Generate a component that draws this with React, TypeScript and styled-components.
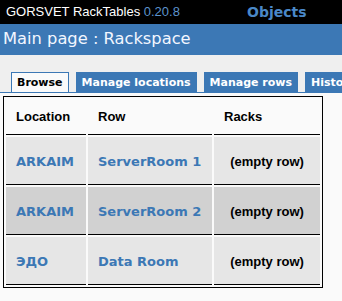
import React from 'react';
import styled, { createGlobalStyle } from 'styled-components';

const GlobalStyle = createGlobalStyle`
  html, body {
    margin: 0;
    padding: 0;
    background: #fafafa;
    overflow: hidden;
  }
  body {
    font-family: "DejaVu Sans", Verdana, sans-serif;
  }
`;

const Page = styled.div`
  width: 342px;
  height: 301px;
  overflow: hidden;
  display: flex;
  flex-direction: column;
`;

const TopBar = styled.div`
  height: 24px;
  background: #000;
  display: flex;
  align-items: center;
  padding-left: 6px;
  white-space: nowrap;
`;

const Brand = styled.div`
  font-family: "Liberation Sans", Arial, sans-serif;
  font-size: 13px;
  color: #ffffff;
  width: 241px;
  padding-bottom: 1px;
`;

const Version = styled.span`
  color: #5c93cc;
`;

const QuickLink = styled.a`
  font-family: "DejaVu Sans", Verdana, sans-serif;
  font-weight: bold;
  font-size: 14px;
  color: #4a88c8;
  text-decoration: none;
  padding-bottom: 1px;
`;

const PathBar = styled.div`
  height: 31px;
  background: #3c78b5;
  color: #f2f6ff;
  font-size: 16.3px;
  display: flex;
  align-items: center;
  padding-left: 3px;
  padding-bottom: 2px;
  box-sizing: border-box;
  white-space: nowrap;
`;

const TabStrip = styled.div`
  background: #efefef;
  padding: 17px 0 0 11px;
  display: flex;
  gap: 7px;
  align-items: flex-end;
  border-bottom: 1px solid #3c78b5;
  white-space: nowrap;
  overflow: hidden;
`;

const Tab = styled.a<{ $active?: boolean }>`
  flex: none;
  display: flex;
  align-items: center;
  box-sizing: border-box;
  height: ${p => (p.$active ? '21px' : '20px')};
  margin-bottom: ${p => (p.$active ? '-1px' : '0')};
  padding: 0 ${p => (p.$active ? '5px' : '6px')};
  padding-bottom: ${p => (p.$active ? '1px' : '0')};
  font-size: 11px;
  font-weight: bold;
  text-decoration: none;
  color: ${p => (p.$active ? '#000' : '#fff')};
  background: ${p => (p.$active ? '#fafafa' : '#3c78b5')};
  border: ${p => (p.$active ? '1px solid #3c78b5' : 'none')};
  border-bottom: none;
`;

const Content = styled.div`
  padding: 3px 0 0 3px;
`;

const Table = styled.table`
  width: 320px;
  border: 1px solid #000;
  border-spacing: 2px;
  background: #fafafa;
`;

const HeadCell = styled.th<{ $w: number }>`
  width: ${p => p.$w}px;
  height: 36px;
  padding: 0 0 0 10px;
  box-sizing: border-box;
  text-align: left;
  vertical-align: middle;
  font-family: "Liberation Sans", Arial, sans-serif;
  font-size: 13px;
  font-weight: bold;
  color: #000;
  border-bottom: 1px solid #000;
`;

const Row = styled.tr<{ $odd: boolean }>`
  background: ${p => (p.$odd ? '#e6e6e6' : '#d1d1d1')};
`;

const Cell = styled.td<{ $center?: boolean }>`
  height: 47px;
  padding: 0 0 0 ${p => (p.$center ? '0' : '10px')};
  text-align: ${p => (p.$center ? 'center' : 'left')};
  vertical-align: middle;
  border-bottom: 1px solid #000;
`;

const RowLink = styled.a`
  font-size: 13px;
  font-weight: bold;
  color: #3c78b5;
  text-decoration: none;
`;

const Empty = styled.span`
  font-family: "Liberation Sans", Arial, sans-serif;
  font-size: 13px;
  font-weight: bold;
  color: #000;
`;

const rows = [
  { location: 'ARKAIM', row: 'ServerRoom 1' },
  { location: 'ARKAIM', row: 'ServerRoom 2' },
  { location: 'ЭДО', row: 'Data Room' },
];

const tabs = ['Browse', 'Manage locations', 'Manage rows', 'History'];

export default function App() {
  return (
    <Page>
      <GlobalStyle />
      <TopBar>
        <Brand>
          GORSVET RackTables <Version>0.20.8</Version>
        </Brand>
        <QuickLink href="#">Objects</QuickLink>
      </TopBar>
      <PathBar>Main page : Rackspace</PathBar>
      <TabStrip>
        {tabs.map((t, i) => (
          <Tab key={t} href="#" $active={i === 0}>
            {t}
          </Tab>
        ))}
      </TabStrip>
      <Content>
        <Table>
          <thead>
            <tr>
              <HeadCell $w={80}>Location</HeadCell>
              <HeadCell $w={124}>Row</HeadCell>
              <HeadCell $w={106}>Racks</HeadCell>
            </tr>
          </thead>
          <tbody>
            {rows.map((r, i) => (
              <Row key={i} $odd={i % 2 === 0}>
                <Cell>
                  <RowLink href="#">{r.location}</RowLink>
                </Cell>
                <Cell>
                  <RowLink href="#">{r.row}</RowLink>
                </Cell>
                <Cell $center>
                  <Empty>(empty row)</Empty>
                </Cell>
              </Row>
            ))}
          </tbody>
        </Table>
      </Content>
    </Page>
  );
}
